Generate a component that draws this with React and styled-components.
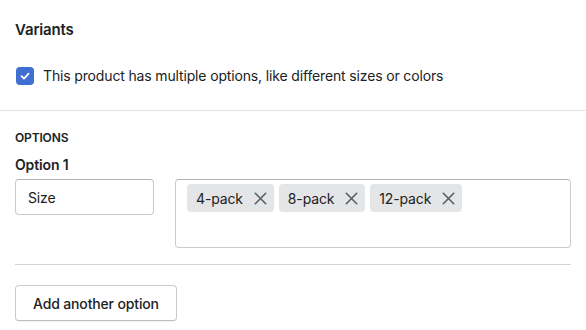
import styled, { createGlobalStyle } from "styled-components";

const GlobalStyle = createGlobalStyle`
    body{
        margin: 0;
        background: #ffffff;
        font-family: Inter, "Noto Sans", sans-serif;
        letter-spacing: -0.15px;
        color: #202223;
    }
`;

const options = [
    { name: "Option 1", value: "Size", tags: ["4-pack", "8-pack", "12-pack"] },
];

export default function App(){
    return(
        <Card>
            <GlobalStyle />
            <Section>
                <Title>Variants</Title>
                <CheckRow>
                    <CheckBox>
                        <svg width="12" height="12" viewBox="0 0 12 12">
                            <path d="M2.5 6.2 L5 8.6 L9.6 3.6" fill="none" stroke="#fff" strokeWidth="1.8" strokeLinecap="round" strokeLinejoin="round" />
                        </svg>
                    </CheckBox>
                    <span>This product has multiple options, like different sizes or colors</span>
                </CheckRow>
            </Section>
            <Options>
                <Caption>Options</Caption>
                {options.map(({name, value, tags}) => (
                    <OptionBlock key={name}>
                        <Label>{name}</Label>
                        <Fields>
                            <TextField>{value}</TextField>
                            <TagField>
                                {tags.map((tag) => (
                                    <Tag key={tag}>
                                        {tag}
                                        <svg width="13" height="13" viewBox="0 0 12 12">
                                            <path d="M1.2 1.2 L10.8 10.8 M10.8 1.2 L1.2 10.8" stroke="#5c5f62" strokeWidth="1.5" strokeLinecap="round" />
                                        </svg>
                                    </Tag>
                                ))}
                            </TagField>
                        </Fields>
                    </OptionBlock>
                ))}
                <Divider />
                <Button>Add another option</Button>
            </Options>
        </Card>
    );
}

const Card = styled.main`
    width: 586px;
    height: 330px;
    overflow: hidden;
`;

const Section = styled.section`
    padding: 20px 15px 25px;
    border-bottom: 1px solid #e1e3e5;
`;

const Title = styled.h2`
    margin: 0;
    font-size: 15px;
    font-weight: 600;
    line-height: 20px;
    color: #202223;
`;

const CheckRow = styled.label`
    display: flex;
    align-items: center;
    gap: 9px;
    margin-top: 27px;
    font-size: 14px;
    line-height: 18px;
    color: #202223;
`;

const CheckBox = styled.span`
    width: 18px;
    height: 18px;
    margin-left: 1px;
    border-radius: 4px;
    background: #3f6fd1;
    display: flex;
    align-items: center;
    justify-content: center;
`;

const Options = styled.section`
    padding: 19px 15px 0;
`;

const Caption = styled.h3`
    margin: 0;
    font-size: 12px;
    font-weight: 600;
    line-height: 16px;
    text-transform: uppercase;
    color: #202223;
`;

const OptionBlock = styled.div`
    margin-top: 10px;
`;

const Label = styled.div`
    font-size: 14px;
    font-weight: 600;
    line-height: 18px;
    margin-bottom: 5px;
`;

const Fields = styled.div`
    display: flex;
    align-items: flex-start;
    gap: 21px;
`;

const TextField = styled.div`
    box-sizing: border-box;
    width: 139px;
    height: 36px;
    padding: 0 12px;
    display: flex;
    align-items: center;
    border: 1px solid #c9cccf;
    border-top-color: #aeb4b9;
    border-radius: 4px;
    font-size: 14px;
`;

const TagField = styled.div`
    box-sizing: border-box;
    flex: 1;
    height: 69px;
    padding: 4px 11px;
    display: flex;
    align-items: flex-start;
    gap: 5px;
    border: 1px solid #c9cccf;
    border-top-color: #aeb4b9;
    border-radius: 4px;
`;

const Tag = styled.span`
    display: flex;
    align-items: center;
    gap: 11px;
    height: 28px;
    padding: 0 7px 0 9px;
    border-radius: 4px;
    background: #e4e5e7;
    font-size: 14px;
    color: #202223;
`;

const Divider = styled.hr`
    margin: 16px 0 0;
    border: 0;
    border-top: 1px solid #d2d5d8;
`;

const Button = styled.button`
    margin-top: 20px;
    height: 36px;
    padding: 0 17px;
    background: #fff;
    border: 1px solid #c9cccf;
    border-bottom-color: #babfc3;
    border-radius: 4px;
    font-family: inherit;
    letter-spacing: inherit;
    font-size: 14px;
    font-weight: 500;
    color: #202223;
    box-shadow: 0 1px 0 rgba(0,0,0,0.05);
`;
